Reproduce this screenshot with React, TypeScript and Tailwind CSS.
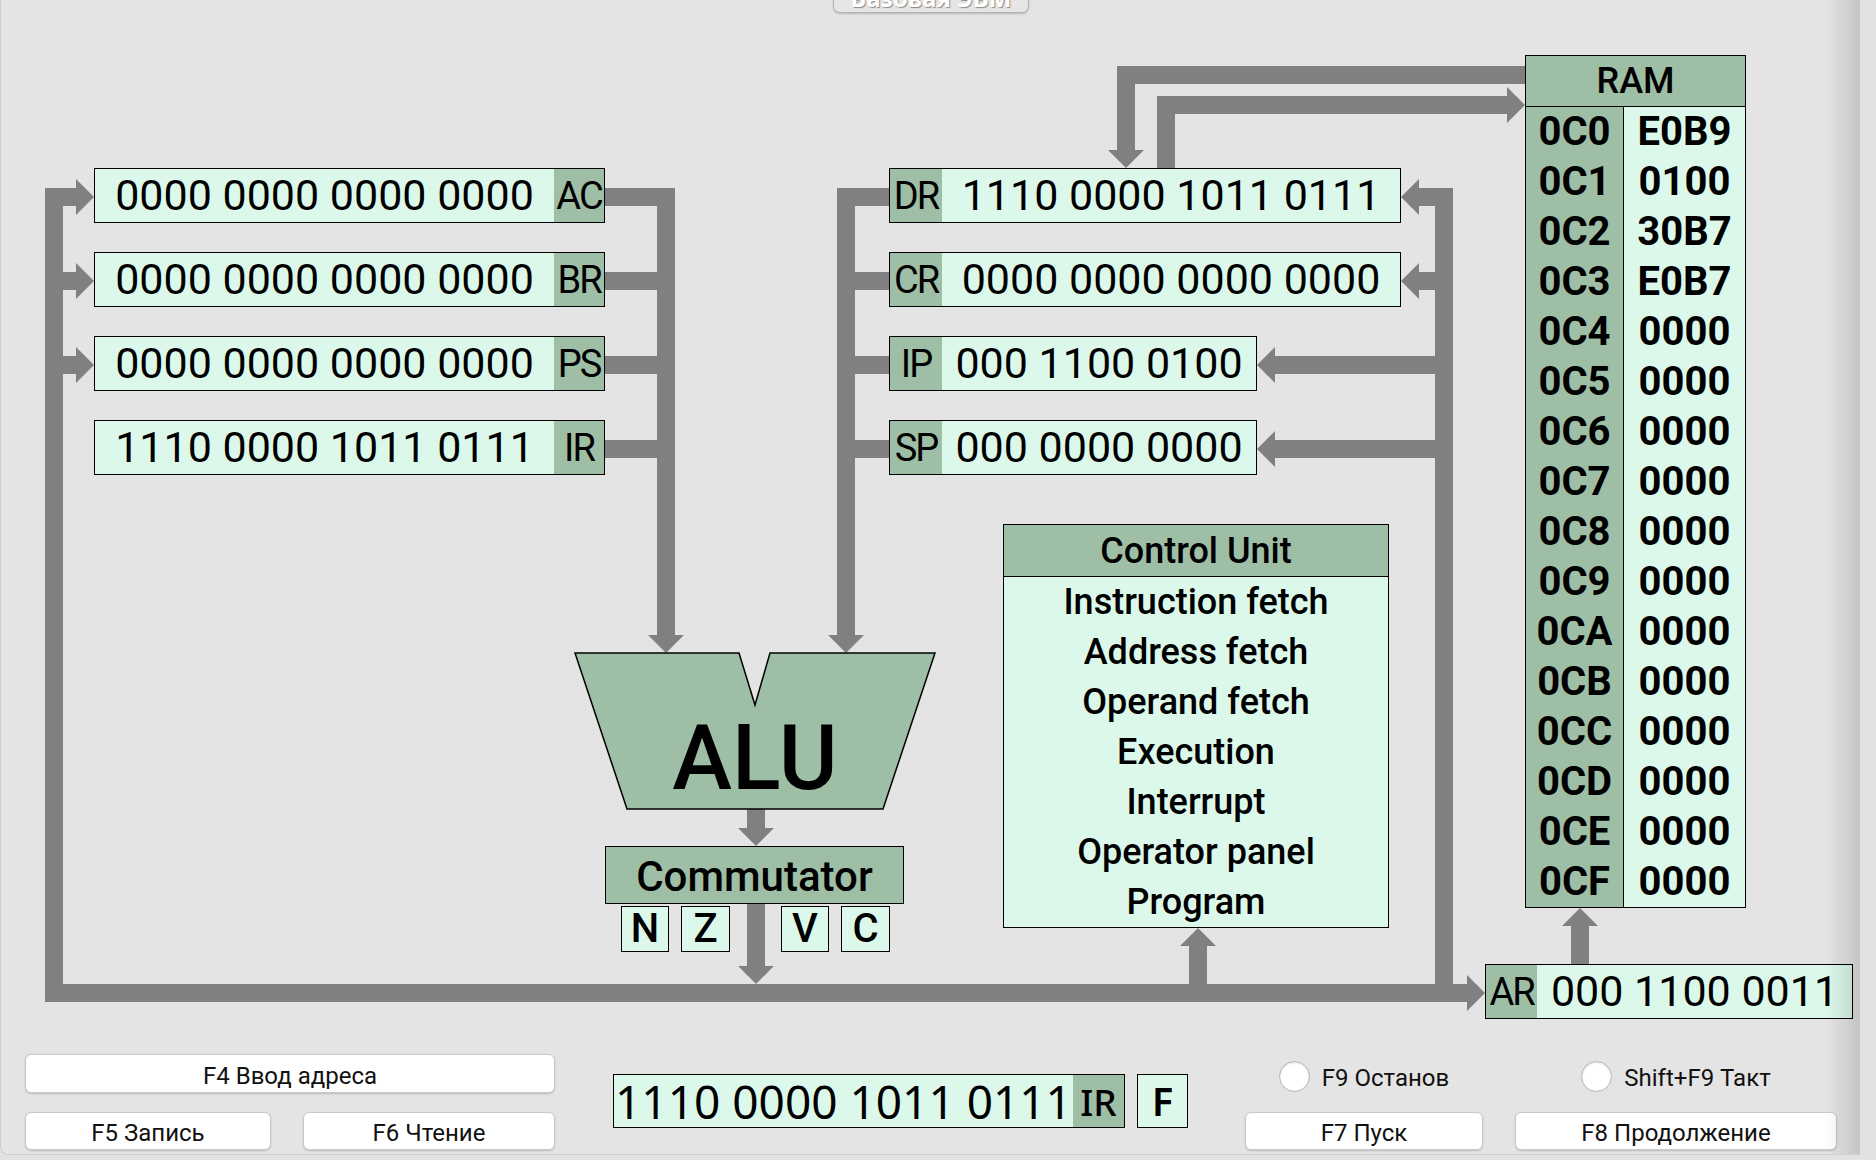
import React from "react";

const GRAY = "#808080";
const H = 18; // arrow head half width / length

type Pt = [number, number];
type Dir = "l" | "r" | "u" | "d";

function Head({ x, y, dir }: { x: number; y: number; dir: Dir }) {
  let pts: Pt[];
  if (dir === "r") pts = [[x - H, y - H], [x, y], [x - H, y + H]];
  else if (dir === "l") pts = [[x + H, y - H], [x, y], [x + H, y + H]];
  else if (dir === "d") pts = [[x - H, y - H], [x, y], [x + H, y - H]];
  else pts = [[x - H, y + H], [x, y], [x + H, y + H]];
  return <polygon points={pts.map((p) => p.join(",")).join(" ")} fill={GRAY} />;
}

// [x, y, w, h]
const BARS: [number, number, number, number][] = [
  // left input bus -> AC, BR, PS
  [44, 188, 18, 814],
  [62, 188, 14, 18],
  [62, 272, 14, 18],
  [62, 356, 14, 18],
  // bottom bus -> AR
  [44, 984, 1423, 18],
  // AC/BR/PS/IR -> ALU
  [656, 188, 18, 448],
  [604, 188, 52, 18],
  [604, 272, 52, 18],
  [604, 356, 52, 18],
  [604, 440, 52, 18],
  // DR/CR/IP/SP -> ALU
  [836, 188, 18, 448],
  [854, 188, 34, 18],
  [854, 272, 34, 18],
  [854, 356, 34, 18],
  [854, 440, 34, 18],
  // right input bus
  [1434, 188, 18, 814],
  [1417, 188, 17, 18],
  [1417, 272, 17, 18],
  [1273, 356, 161, 18],
  [1273, 440, 161, 18],
  // RAM -> DR
  [1116, 66, 408, 18],
  [1116, 66, 18, 85],
  // DR -> RAM
  [1156, 96, 18, 72],
  [1156, 96, 351, 18],
  // ALU -> commutator -> bus
  [746, 808, 18, 21],
  [746, 904, 18, 63],
  // bus -> control unit
  [1188, 945, 18, 39],
  // AR -> RAM
  [1570, 925, 18, 39],
];

const HEADS: { x: number; y: number; dir: Dir }[] = [
  { x: 93, y: 197, dir: "r" },
  { x: 93, y: 281, dir: "r" },
  { x: 93, y: 365, dir: "r" },
  { x: 1484, y: 993, dir: "r" },
  { x: 665, y: 653, dir: "d" },
  { x: 845, y: 653, dir: "d" },
  { x: 1400, y: 197, dir: "l" },
  { x: 1400, y: 281, dir: "l" },
  { x: 1256, y: 365, dir: "l" },
  { x: 1256, y: 449, dir: "l" },
  { x: 1125, y: 168, dir: "d" },
  { x: 1524, y: 105, dir: "r" },
  { x: 755, y: 846, dir: "d" },
  { x: 755, y: 984, dir: "d" },
  { x: 1197, y: 928, dir: "u" },
  { x: 1579, y: 908, dir: "u" },
];

function Reg({
  pos,
  label,
  value,
  labelLeft,
  labelW,
}: {
  pos: string;
  label: string;
  value: string;
  labelLeft?: boolean;
  labelW: string;
}) {
  const lab = (
    <div
      className={`flex h-full shrink-0 items-center justify-center bg-[#9fbea6] text-[38px] leading-none tracking-[-2px] ${labelW}`}
    >
      {label}
    </div>
  );
  return (
    <div className={`absolute flex h-[55px] border border-black ${pos}`}>
      {labelLeft && lab}
      <div className="flex h-full flex-1 items-center justify-center bg-[#dcf8ea] text-[43px] leading-none whitespace-pre">
        {value}
      </div>
      {!labelLeft && lab}
    </div>
  );
}

const RAM = [
  ["0C0", "E0B9"],
  ["0C1", "0100"],
  ["0C2", "30B7"],
  ["0C3", "E0B7"],
  ["0C4", "0000"],
  ["0C5", "0000"],
  ["0C6", "0000"],
  ["0C7", "0000"],
  ["0C8", "0000"],
  ["0C9", "0000"],
  ["0CA", "0000"],
  ["0CB", "0000"],
  ["0CC", "0000"],
  ["0CD", "0000"],
  ["0CE", "0000"],
  ["0CF", "0000"],
];

const CU_ITEMS = [
  "Instruction fetch",
  "Address fetch",
  "Operand fetch",
  "Execution",
  "Interrupt",
  "Operator panel",
  "Program",
];

function Button({ w, children }: { w: string; children: React.ReactNode }) {
  return (
    <div
      className={`flex h-[38px] items-center justify-center rounded-[6px] border border-[#c9c9c9] bg-white pt-[4px] text-[24px] leading-none text-[#111] shadow-[0_1px_2px_rgba(0,0,0,0.18)] ${w}`}
    >
      {children}
    </div>
  );
}

function Radio({ label }: { label: string }) {
  return (
    <div className="mt-[3px] flex h-[39px] items-center justify-center gap-[12px]">
      <div className="h-[31px] w-[31px] rounded-full border border-[#b5b5b5] bg-white shadow-[inset_0_1px_2px_rgba(0,0,0,0.12)]" />
      <span className="pt-[3px] text-[24px] leading-none text-[#111]">{label}</span>
    </div>
  );
}

export default function App() {
  return (
    <div className="h-[1160px] w-[1876px] overflow-hidden bg-[#e2e2e2] text-black [font-family:Roboto,'Liberation_Sans',sans-serif]">
      <div className="relative h-[1155px] w-[1860px] rounded-bl-[8px] border-b border-l border-[#cfcfcf] bg-[#e4e4e4]">
        {/* title tab */}
        <div className="absolute left-[832px] top-[-26px] flex h-[39px] w-[196px] justify-center rounded-b-[7px] border border-[#b3b3b3] bg-[#e6e6e6] pt-[11px] shadow-[0_1px_2px_rgba(0,0,0,0.2)]">
          <span className="text-[24px] font-bold leading-none text-white [font-family:'Noto_Sans',sans-serif] [text-shadow:1px_1px_1px_#8a8a8a]">
            Базовая ЭВМ
          </span>
        </div>

        {/* diagram */}
        <div className="relative h-[1040px]">
          <svg className="absolute left-0 top-0" width={1860} height={1040}>
            {BARS.map(([x, y, w, h], i) => (
              <rect key={i} x={x} y={y} width={w} height={h} fill={GRAY} />
            ))}
            {HEADS.map((h, i) => (
              <Head key={i} {...h} />
            ))}
            <polygon
              points="574,653 738,653 754,705 769,653 934,653 882,809 626,809"
              fill="#9fbea6"
              stroke="#000"
              strokeWidth={1.5}
            />
          </svg>

          <Reg pos="left-[93px] top-[168px] w-[511px]" label="AC" value="0000 0000 0000 0000" labelW="w-[50px]" />
          <Reg pos="left-[93px] top-[252px] w-[511px]" label="BR" value="0000 0000 0000 0000" labelW="w-[50px]" />
          <Reg pos="left-[93px] top-[336px] w-[511px]" label="PS" value="0000 0000 0000 0000" labelW="w-[50px]" />
          <Reg pos="left-[93px] top-[420px] w-[511px]" label="IR" value="1110 0000 1011 0111" labelW="w-[50px]" />

          <Reg pos="left-[888px] top-[168px] w-[512px]" label="DR" value="1110 0000 1011 0111" labelLeft labelW="w-[52px]" />
          <Reg pos="left-[888px] top-[252px] w-[512px]" label="CR" value="0000 0000 0000 0000" labelLeft labelW="w-[52px]" />
          <Reg pos="left-[888px] top-[336px] w-[368px]" label="IP" value="000 1100 0100" labelLeft labelW="w-[52px]" />
          <Reg pos="left-[888px] top-[420px] w-[368px]" label="SP" value="000 0000 0000" labelLeft labelW="w-[52px]" />

          <Reg pos="left-[1484px] top-[964px] w-[368px]" label="AR" value="000 1100 0011" labelLeft labelW="w-[51px]" />

          {/* ALU */}
          <div className="absolute left-[554px] top-[714px] w-[400px] text-center text-[90px] font-medium leading-none">
            ALU
          </div>

          {/* Commutator + flags */}
          <div className="absolute left-[604px] top-[846px] flex h-[58px] w-[299px] items-center justify-center border border-black bg-[#9fbea6] pt-[3px] text-[42px] font-medium leading-none">
            Commutator
          </div>
          <div className="absolute left-[620px] top-[906px] flex gap-[12px]">
            <div className="flex h-[46px] w-[48px] items-center justify-center border border-black bg-[#dcf8ea] text-[40px] font-medium leading-none">N</div>
            <div className="flex h-[46px] w-[49px] items-center justify-center border border-black bg-[#dcf8ea] text-[40px] font-medium leading-none">Z</div>
          </div>
          <div className="absolute left-[780px] top-[906px] flex gap-[12px]">
            <div className="flex h-[46px] w-[48px] items-center justify-center border border-black bg-[#dcf8ea] text-[40px] font-medium leading-none">V</div>
            <div className="flex h-[46px] w-[49px] items-center justify-center border border-black bg-[#dcf8ea] text-[40px] font-medium leading-none">C</div>
          </div>

          {/* Control unit */}
          <div className="absolute left-[1002px] top-[524px] flex h-[404px] w-[386px] flex-col border border-black bg-[#dcf8ea]">
            <div className="flex h-[52px] shrink-0 items-center justify-center border-b border-black bg-[#9fbea6] text-[36px] font-medium leading-none">
              Control Unit
            </div>
            {CU_ITEMS.map((t) => (
              <div key={t} className="flex h-[50px] shrink-0 items-center justify-center text-[36px] font-medium leading-none">
                {t}
              </div>
            ))}
          </div>

          {/* RAM */}
          <div className="absolute left-[1524px] top-[55px] flex h-[853px] w-[221px] flex-col border border-black">
            <div className="flex h-[51px] shrink-0 items-center justify-center border-b border-black bg-[#9fbea6] text-[36px] font-medium leading-none">
              RAM
            </div>
            <div className="flex flex-1">
              <div className="w-[98px] shrink-0 border-r border-black bg-[#9fbea6]">
                {RAM.map(([a]) => (
                  <div key={a} className="flex h-[50px] items-center justify-center text-[40px] font-bold leading-none">
                    {a}
                  </div>
                ))}
              </div>
              <div className="flex-1 bg-[#dcf8ea]">
                {RAM.map(([a, v]) => (
                  <div key={a} className="flex h-[50px] items-center justify-center text-[40px] font-bold leading-none">
                    {v}
                  </div>
                ))}
              </div>
            </div>
          </div>
        </div>

        {/* controls */}
        <div className="flex items-start pl-[24px] pt-[14px]">
          <div className="flex w-[530px] flex-col gap-[19px]">
            <Button w="w-full h-[39px]">F4 Ввод адреса</Button>
            <div className="flex gap-[32px]">
              <Button w="w-[246px]">F5 Запись</Button>
              <Button w="w-[252px]">F6 Чтение</Button>
            </div>
          </div>

          <div className="ml-[58px] mt-[20px] flex gap-[12px] [font-family:'Noto_Sans',sans-serif]">
            <div className="flex h-[54px] w-[512px] border border-black">
              <div className="flex h-full flex-1 items-center justify-center bg-[#dcf8ea] text-[46px] leading-none whitespace-pre">
                1110 0000 1011 0111
              </div>
              <div className="flex h-full w-[51px] items-center justify-center bg-[#9fbea6] text-[37px] font-medium leading-none">
                IR
              </div>
            </div>
            <div className="flex h-[54px] w-[51px] items-center justify-center border border-black bg-[#dcf8ea] text-[40px] font-semibold leading-none">
              F
            </div>
          </div>

          <div className="ml-[57px] grid grid-cols-[238px_322px] gap-x-[32px] gap-y-[16px]">
            <Radio label="F9 Останов" />
            <Radio label="Shift+F9 Такт" />
            <Button w="w-full">F7 Пуск</Button>
            <Button w="w-full">F8 Продолжение</Button>
          </div>
        </div>

        {/* right edge shadow */}
        <div className="pointer-events-none absolute right-0 top-0 h-full w-[34px] bg-linear-to-r from-[rgba(0,0,0,0)] to-[rgba(0,0,0,0.14)]" />
      </div>
    </div>
  );
}
